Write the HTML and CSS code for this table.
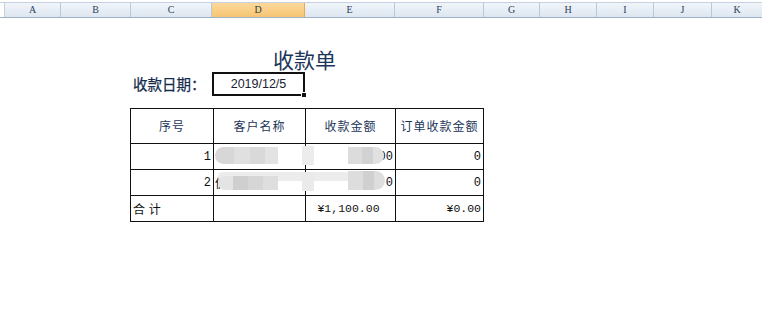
FILE: index.html
```html
<!DOCTYPE html>
<html lang="zh">
<head>
<meta charset="utf-8">
<title>收款单</title>
<link rel="stylesheet" href="styles.css">
</head>
<body>
<div class="colbar">
  <div class="corner"></div>
  <div class="col w-a">A</div>
  <div class="col w-b">B</div>
  <div class="col w-c">C</div>
  <div class="col w-d sel">D</div>
  <div class="col w-e">E</div>
  <div class="col w-f">F</div>
  <div class="col w-g">G</div>
  <div class="col w-h">H</div>
  <div class="col w-i">I</div>
  <div class="col w-j">J</div>
  <div class="col w-k">K</div>
</div>

<div class="sheet">
  <div class="title">收款单</div>
  <div class="daterow">
    <div class="datelabel">收款日期：</div>
    <div class="datebox">2019/12/5<span class="handle"></span></div>
  </div>

  <div class="tablewrap">
    <div class="grid">
      <div class="cell head">序号</div>
      <div class="cell head">客户名称</div>
      <div class="cell head">收款金额</div>
      <div class="cell head">订单收款金额</div>

      <div class="cell num">1</div>
      <div class="cell"></div>
      <div class="cell num">00</div>
      <div class="cell num">0</div>

      <div class="cell num">2</div>
      <div class="cell left cut">仿</div>
      <div class="cell num">0</div>
      <div class="cell num">0</div>

      <div class="cell left total">合 计</div>
      <div class="cell"></div>
      <div class="cell money center">¥1,100.00</div>
      <div class="cell money">¥0.00</div>
    </div>
    <div class="blur b1"></div>
    <div class="blur s1"></div>
    <div class="blur b2"></div>
    <div class="blur band"></div>
    <div class="blur b3"></div>
    <div class="blur s2"></div>
    <div class="blur b4"></div>
  </div>
</div>
</body>
</html>
```

FILE: styles.css
```css
html, body {
  margin: 0;
  padding: 0;
  background: #ffffff;
}
body {
  width: 762px;
  height: 315px;
  overflow: hidden;
  font-family: "Noto Sans CJK SC", "Noto Sans", sans-serif;
}

/* column header bar */
.colbar {
  display: flex;
  margin-top: 2px;
  height: 14px;
  border-top: 1px solid #c5d1de;
  border-bottom: 1px solid #9fb3c8;
}
.corner {
  width: 5px;
  background: #ffffff;
  border-right: 1px solid #c5d1de;
  box-sizing: border-box;
}
.col {
  box-sizing: border-box;
  height: 14px;
  border-right: 1px solid #b9c7d7;
  background: linear-gradient(#f1f5fa, #dde6f0);
  font-family: "Liberation Serif", "DejaVu Serif", serif;
  font-size: 10px;
  line-height: 14px;
  color: #2c405c;
  text-align: center;
}
.col.sel {
  background: linear-gradient(#fbd99b, #f6c574);
  border-right-color: #e9a94e;
  color: #3a3a3a;
}
.w-a { width: 56px; }
.w-b { width: 70px; }
.w-c { width: 81px; }
.w-d { width: 93px; }
.w-e { width: 90px; }
.w-f { width: 89px; }
.w-g { width: 56px; }
.w-h { width: 57px; }
.w-i { width: 57px; }
.w-j { width: 58px; }
.w-k { width: 50px; border-right: none; }

/* sheet content */
.sheet {
  margin-left: 130px;
  width: 354px;
}
.title {
  margin-top: 31px;
  padding-right: 5px;
  height: 21px;
  font-size: 21px;
  line-height: 21px;
  text-align: center;
  color: #1c3659;
}
.daterow {
  margin-top: 2px;
  display: flex;
  align-items: center;
}
.datelabel {
  width: 82px;
  padding-left: 3px;
  box-sizing: border-box;
  font-size: 14.5px;
  line-height: 24px;
  color: #152c4d;
  font-weight: 400;
  -webkit-text-stroke: 0.25px #152c4d;
}
.datebox {
  position: relative;
  box-sizing: border-box;
  width: 93px;
  height: 24px;
  border: 2px solid #111111;
  font-family: "Liberation Sans", Arial, sans-serif;
  font-size: 12.5px;
  line-height: 20px;
  text-align: center;
  color: #1a2233;
}
.handle {
  position: absolute;
  right: -4px;
  bottom: -4px;
  width: 4px;
  height: 4px;
  background: #111111;
  border: 1px solid #ffffff;
}

/* table */
.tablewrap {
  position: relative;
  margin-top: 12px;
}
.grid {
  display: grid;
  grid-template-columns: 82px 91px 89px 87px;
  grid-template-rows: 34px 25px 25px 25px;
  gap: 1px;
  background: #111111;
  border: 1px solid #111111;
  width: 352px;
}
.cell {
  background: #ffffff;
  font-size: 12px;
  line-height: 25px;
  color: #111111;
  overflow: hidden;
  white-space: nowrap;
}
.cell.head {
  text-align: center;
  line-height: 34px;
  color: #1c3659;
  letter-spacing: 1px;
}
.cell.num {
  text-align: right;
  padding-right: 2px;
  font-family: "Liberation Mono", "DejaVu Sans Mono", monospace;
  font-size: 12px;
  line-height: 27px;
}
.cell.left {
  text-align: left;
  padding-left: 2px;
}
.cell.cut {
  padding-left: 1px;
}
.cell.total {
  letter-spacing: 0.5px;
}
.cell.money {
  font-family: "Liberation Mono", "DejaVu Sans Mono", monospace;
  font-size: 11.5px;
  line-height: 26px;
  text-align: right;
  padding-right: 2px;
}
.cell.money.center {
  text-align: center;
  padding-right: 4px;
}

/* redaction smudges */
.blur {
  position: absolute;
  filter: blur(0.6px);
}
.b1 {
  left: 85px; top: 39px; width: 63px; height: 17px;
  border-radius: 9px 0 0 9px;
  background: linear-gradient(90deg, #d7d7d7 0 30%, #e0e0e0 30% 55%, #d9d9d9 55% 80%, #e3e3e3 80%);
}
.s1 {
  left: 172px; top: 38px; width: 12px; height: 19px;
  background: #ececec;
}
.b2 {
  left: 218px; top: 39px; width: 36px; height: 17px;
  border-radius: 0 9px 9px 0;
  background: linear-gradient(90deg, #dcdcdc 0 40%, #d2d2d2 40% 70%, #e1e1e1 70%);
}
.band {
  left: 88px; top: 64px; width: 165px; height: 9px;
  border-radius: 5px;
  background: #ececec;
}
.b3 {
  left: 88px; top: 68px; width: 60px; height: 14px;
  border-radius: 8px 0 0 8px;
  background: linear-gradient(90deg, #e4e4e4 0 25%, #cfcfcf 25% 50%, #d6d6d6 50% 75%, #dedede 75%);
}
.s2 {
  left: 172px; top: 64px; width: 12px; height: 19px;
  background: #eaeaea;
}
.b4 {
  left: 218px; top: 63px; width: 37px; height: 19px;
  border-radius: 0 10px 10px 0;
  background: linear-gradient(90deg, #dddddd 0 40%, #d0d0d0 40% 70%, #dedede 70%);
}
```
